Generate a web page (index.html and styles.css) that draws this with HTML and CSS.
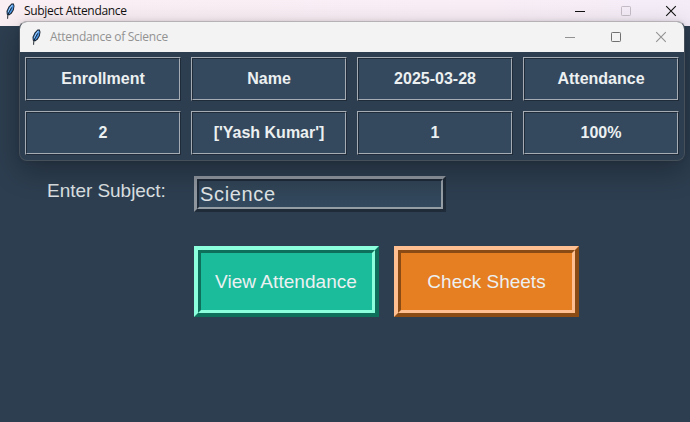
FILE: index.html
```
<!DOCTYPE html>
<html lang="en">
<head>
<meta charset="utf-8">
<title>Subject Attendance</title>
<link rel="stylesheet" href="styles.css">
</head>
<body>
<svg width="0" height="0" class="defs">
  <symbol id="feather" viewBox="0 0 16 16">
    <path d="M9.5 .5h2.3l.7 2.5-.7 4-2 3.5L7 12.6 4.8 11.5 4.5 8 6.5 3.7Z" fill="#17212d"/>
    <path d="M9.8 1.5 11.2 1.4 11.6 3.4 10.9 6.7 8.8 10 6.7 11.5 5.5 10.6 5.6 8 7.4 4.3Z" fill="#4c94e2"/>
    <path d="M10.3 2 8.2 5 6.4 8.8" fill="none" stroke="#a0cff8" stroke-width="1"/>
    <path d="M9.8 4.4 7.4 8.7 5.8 12 5.6 15.8" fill="none" stroke="#101822" stroke-width=".9"/>
  </symbol>
  <symbol id="min" viewBox="0 0 12 12"><path d="M1 6.5h10" stroke="currentColor"/></symbol>
  <symbol id="max" viewBox="0 0 12 12"><rect x="1.5" y="1.5" width="9" height="9" rx=".8" fill="none" stroke="currentColor"/></symbol>
  <symbol id="close" viewBox="0 0 12 12"><path d="M1.2 1.2 10.8 10.8M10.8 1.2 1.2 10.8" fill="none" stroke="currentColor" stroke-width="1.1"/></symbol>
</svg>
<main class="window">
  <header class="titlebar">
    <svg class="feather"><use href="#feather"/></svg>
    <span class="title">Subject Attendance</span>
    <div class="controls">
      <svg><use href="#min"/></svg><svg class="disabled"><use href="#max"/></svg><svg><use href="#close"/></svg>
    </div>
  </header>
  <section class="form">
    <div class="field">
      <label class="label">Enter Subject:</label>
      <div class="entry"><div class="entry-inner">Science</div></div>
    </div>
    <div class="actions">
      <div class="button green"><div class="face"><span class="view-text">View Attendance</span></div></div>
      <div class="button orange"><div class="face"><span class="check-text">Check Sheets</span></div></div>
    </div>
  </section>
</main>
<section class="popup">
  <header class="popup-bar">
    <svg class="feather"><use href="#feather"/></svg>
    <span class="title">Attendance of Science</span>
    <div class="controls">
      <svg><use href="#min"/></svg><svg class="dark"><use href="#max"/></svg><svg><use href="#close"/></svg>
    </div>
  </header>
  <div class="table">
    <div class="cell"><div>Enrollment</div></div>
    <div class="cell"><div>Name</div></div>
    <div class="cell"><div>2025-03-28</div></div>
    <div class="cell"><div>Attendance</div></div>
    <div class="cell"><div>2</div></div>
    <div class="cell"><div>['Yash Kumar']</div></div>
    <div class="cell"><div>1</div></div>
    <div class="cell"><div>100%</div></div>
  </div>
</section>
</body>
</html>
```

FILE: styles.css
```
* { box-sizing: border-box; }
body { margin: 0; width: 690px; height: 422px; overflow: hidden; font-family: "Liberation Sans", Arial, sans-serif; color: #ecf0f1; }
.defs { position: absolute; }
.window { height: 422px; display: flex; flex-direction: column; background: #2d3e50; }
.titlebar { height: 26px; flex: none; padding: 0 13px 5px 2px; display: flex; align-items: center; background: linear-gradient(90deg, #faeff3, #f9eef6 70%, #f4edf8); color: #111; }
.title { font: 12px/16px "Open Sans", "Noto Sans", sans-serif; white-space: nowrap; }
.titlebar .title { margin-left: 6px; letter-spacing: -.31px; }
.feather { width: 16px; height: 16px; flex: none; }
.controls { margin-left: auto; display: flex; gap: 33.5px; }
.controls svg { width: 12px; height: 12px; display: block; }
.titlebar .disabled { color: #c5bec6; }
.form { padding: 150px 0 0 47px; }
.field { display: flex; height: 36px; }
.label { width: 147px; font-size: 19px; line-height: 30px; letter-spacing: -.04px; color: #dce0e2; white-space: nowrap; }
.entry { width: 252px; height: 36px; border: 3px solid; border-color: #8f969e #1f2b38 #1f2b38 #8f969e; }
.entry-inner { height: 30px; border: 2px solid; border-color: #1f2b38 #959da5 #959da5 #1f2b38; background: linear-gradient(#304355, #33495e); padding-left: 1px; font-size: 20px; line-height: 26px; letter-spacing: .65px; color: #dfe3e5; }
.actions { display: flex; gap: 15px; margin: 34px 0 0 147px; }
.button { width: 185px; height: 71px; border: 4px solid; }
.face { height: 63px; border: 3px solid; display: flex; align-items: center; justify-content: center; font-size: 19px; white-space: nowrap; }
.view-text { margin-right: 1px; letter-spacing: .05px; }
.green { border-color: #8cffdc #0e705a #0e705a #8cffdc; }
.green .face { background: #1abc9c; border-color: #0e705a #8cffdc #8cffdc #0e705a; }
.orange { border-color: #ffbf90 #8a4b14 #8a4b14 #ffbf90; }
.orange .face { background: #e67e22; border-color: #8a4b14 #ffbf90 #ffbf90 #8a4b14; }
.popup { position: absolute; left: 19px; top: 21px; width: 666px; height: 140px; border: 1px solid #46505a; border-top-color: #b5b1b4; border-radius: 8px; background: #2c3e50; overflow: hidden; box-shadow: 0 10px 28px rgba(0,0,0,.3), 0 0 4px rgba(0,0,0,.1); }
.popup-bar { height: 30px; padding: 0 17px 0 8px; display: flex; align-items: center; background: #f3f3f3; color: #929292; }
.popup-bar .title { margin-left: 6px; letter-spacing: -.27px; }
.popup-bar .dark { color: #707070; }
.table { padding: 5px; display: grid; grid-template-columns: repeat(4, 156px); grid-auto-rows: 44px; gap: 10px; }
.cell { border: 1px solid; border-color: #a5acb4 #1f2b38 #1f2b38 #a5acb4; }
.cell div { height: 42px; border: 1px solid; border-color: #1f2b38 #a5acb4 #a5acb4 #1f2b38; background: #34495e; font-weight: bold; font-size: 16px; line-height: 40px; text-align: center; }
```
